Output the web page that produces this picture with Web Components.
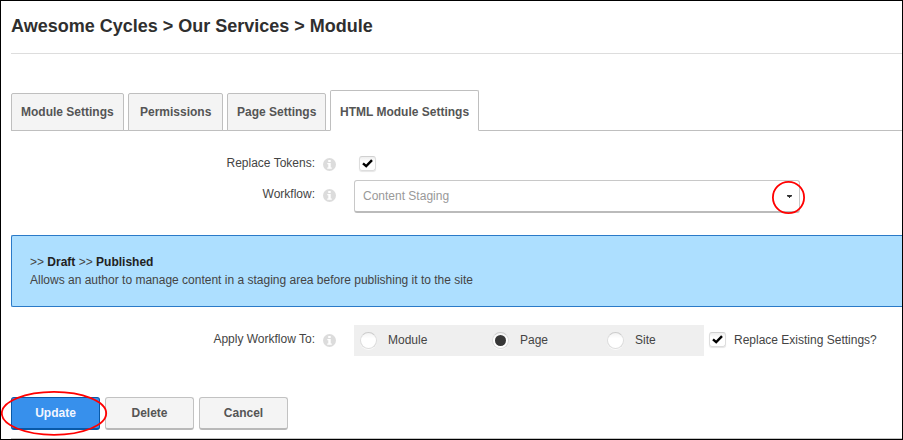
<!DOCTYPE html>
<html lang="en">
<head>
<meta charset="utf-8">
<title>Module settings</title>
<style>
html,body{margin:0;height:100%;overflow:hidden;background:#fff}
body{font:12px/18px "Liberation Sans",Arial,sans-serif;color:#444}
</style>
</head>
<body>
<module-settings></module-settings>
<script>
const define = (name, html) => customElements.define(name, class extends HTMLElement {
  constructor() {
    super();
    this.attachShadow({mode: 'open'}).innerHTML = '<style>*{box-sizing:border-box}:host{box-sizing:border-box}</style>' + html;
  }
});

define('page-title', `<style>
:host{display:block;height:53px;border-bottom:1px solid #ddd}
h1{margin:0;padding-top:14px;font-size:18px;line-height:22px;font-weight:700;color:#2f2f2f;white-space:nowrap}
</style><h1><slot></slot></h1>`);

define('tab-bar', `<style>
:host{display:flex;align-items:flex-end;gap:4px;height:41px;margin-top:36px;box-shadow:inset 0 -1px #bfbfbf}
</style><slot></slot>`);

define('tab-item', `<style>
:host{display:block;width:var(--w);height:38px;border:1px solid #bfbfbf;border-radius:2px 2px 0 0;background:#f4f4f4;font-weight:700;color:#555;padding:10px 0 0 9px;line-height:16px;white-space:nowrap}
:host([active]){height:41px;background:#fff;border-bottom-color:#fff;padding-top:13px}
</style><slot></slot>`);

define('info-icon', `<style>:host{display:block;width:13px;height:13px}svg{display:block}</style>
<svg width="13" height="13" viewBox="0 0 13 13"><circle cx="6.5" cy="6.5" r="6.5" fill="#dcdcdc"/><path d="M5.2 1.9h2.5v2H5.2zM4.3 4.9h3.4v4.5h1.1v1.4H4.2V9.4h1.1V6.2h-1z" fill="#fff"/></svg>`);

define('check-box', `<style>
:host{display:block;width:17px;height:15px;border:1px solid #ddd;border-top-color:#d0d0d0;border-radius:3px;background:linear-gradient(#eee,#fff 35%);box-shadow:0 1px 1px #e6e6e6}svg{display:block}
</style><svg width="15" height="13" viewBox="0 0 15 13"><path d="M3 6.4 L6.2 9.2 L12 3.2" fill="none" stroke="#000" stroke-width="2.4"/></svg>`);

define('radio-button', `<style>
:host{display:grid;place-items:center;width:17px;height:17px;border-radius:50%;border:1px solid #ddd;border-top-color:#ccc;background:linear-gradient(#f3f3f3,#fff 35%);box-shadow:0 1px #fafafa}
i{display:none;width:11px;height:11px;border-radius:50%;background:#383838}
:host([checked]) i{display:block}
</style><i></i>`);

define('field-label', `<style>
:host{display:flex;width:325px;height:18px;justify-content:flex-end;gap:8px;white-space:nowrap}
info-icon{margin-top:4px}
</style><span><slot></slot></span><info-icon></info-icon>`);

define('form-row', `<style>:host{display:flex;align-items:flex-start}</style><slot></slot>`);

define('select-box', `<style>
:host{display:flex;position:relative;align-items:center;width:446px;height:33px;border:1px solid #c8c8c8;border-bottom:2px solid #bbb;border-radius:3px;padding:0 8px;color:#999;justify-content:space-between}
svg{display:block}
.arrow{margin-right:-1px}
.ring{position:absolute;left:416px;top:-1px}
</style><slot></slot><svg class="arrow" width="5" height="3"><path d="M0 0h5v1.5H4v.5H3v1H2V2H1v-.5H0z" fill="#333"/></svg>
<svg class="ring" width="35" height="35"><circle cx="17.5" cy="17.5" r="15.6" fill="none" stroke="#f00" stroke-width="1.8"/></svg>`);

define('info-panel', `<style>
:host{display:block;height:72px;border:1px solid #2a7ac8;border-right:0;border-radius:2px 0 0 2px;background:#addfff;padding:17px 18px}
::slotted(p){margin:0}
</style><slot></slot>`);

define('radio-group', `<style>
:host{display:flex;align-items:flex-start;width:350px;height:31px;background:#efefef;padding:7px 0 0 6px}
.o{display:flex;gap:11px;line-height:16px}
</style><div class="o" style="width:132px"><radio-button></radio-button><span>Module</span></div><div class="o" style="width:115px"><radio-button checked></radio-button><span>Page</span></div><div class="o"><radio-button></radio-button><span>Site</span></div>`);

define('action-button', `<style>
:host{display:block;position:relative;width:89px;height:33px}
button{display:block;width:100%;height:100%;padding:0;border:1px solid #c2c2c2;border-bottom:2px solid #b9b9b9;border-radius:3px;background:#f4f4f4;font:700 12px/16px "Liberation Sans",Arial,sans-serif;color:#555}
:host([primary]) button{background:#3790ec;border-color:#0859a8;color:#f2f6ff}
svg{display:none;position:absolute;left:-11px;top:-7px}
:host([primary]) svg{display:block}
:host([primary]){z-index:1}
</style><button><slot></slot></button><svg width="108" height="46"><ellipse cx="54" cy="23.3" rx="52.2" ry="21.5" fill="none" stroke="#f00" stroke-width="1.8"/></svg>`);

define('module-settings', `<style>
:host{display:block;width:903px;height:440px;border:1px solid #000;padding-left:10px;overflow:hidden;background:#fff}
.actions{display:flex;gap:5px;height:42px;margin-top:41px;border-bottom:1px solid #c4c4c4}
b{color:#222}
</style>
<page-title>Awesome Cycles &gt; Our Services &gt; Module</page-title>
<tab-bar>
<tab-item style="--w:113px">Module Settings</tab-item><tab-item style="--w:95px;padding-left:11px">Permissions</tab-item><tab-item style="--w:99px">Page Settings</tab-item><tab-item active style="--w:149px">HTML Module Settings</tab-item>
</tab-bar>
<form-row style="margin-top:23px;height:26px"><field-label>Replace Tokens:</field-label><check-box style="margin:2px 0 0 23px"></check-box></form-row>
<form-row style="height:33px"><field-label style="margin-top:5px">Workflow:</field-label><select-box style="margin-left:18px">Content Staging</select-box></form-row>
<info-panel style="margin-top:22px"><p>&gt;&gt; <b>Draft</b> &gt;&gt; <b>Published</b></p><p>Allows an author to manage content in a staging area before publishing it to the site</p></info-panel>
<form-row style="margin-top:18px;height:31px"><field-label style="margin-top:5px">Apply Workflow To:</field-label><radio-group style="margin-left:18px"></radio-group><check-box style="margin:7px 0 0 5px"></check-box><span style="margin:6px 0 0 8px">Replace Existing Settings?</span></form-row>
<div class="actions"><action-button primary>Update</action-button><action-button>Delete</action-button><action-button>Cancel</action-button></div>`);
</script>
</body>
</html>
